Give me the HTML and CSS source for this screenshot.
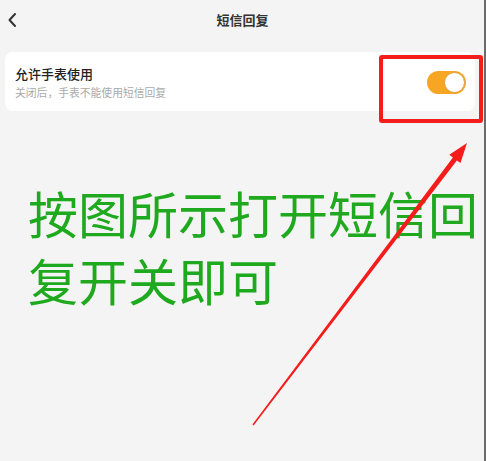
FILE: index.html
```html
<!DOCTYPE html>
<html>
<head>
  <meta charset="utf-8">
  <link rel="stylesheet" href="styles.css">
</head>

<body>
  <div class="page">
    <!-- Top bar -->
    <div class="header">
      <svg class="back" width="10" height="16" viewBox="0 0 10 16">
        <path d="M8 2 L2.5 8 L8 14" fill="none" stroke="#333" stroke-width="2" stroke-linecap="round" stroke-linejoin="round"/>
      </svg>
      <div class="title">短信回复</div>
    </div>

    <!-- Setting card -->
    <div class="card">
      <div class="card-text">
        <div class="card-title">允许手表使用</div>
        <div class="card-desc">关闭后，手表不能使用短信回复</div>
      </div>
      <div class="switch on"><span class="knob"></span></div>
    </div>

    <p class="hint">按图所示打开短信回<br>复开关即可</p>

    <!-- Annotations drawn over the screenshot -->
    <div class="mark-box"></div>
    <svg class="arrow" width="486" height="461" viewBox="0 0 486 461">
      <polygon points="252.4,424.6 452.9,157.4 449.3,154.7 467,143 460.5,163.1 456.9,160.4 253.6,425.4" fill="#f51c1c"/>
    </svg>
  </div>
</body>
</html>
```

FILE: styles.css
```css
html, body {
  margin: 0;
  padding: 0;
}

body {
  background-color: #f4f4f4;
  font-family: "Noto Sans CJK SC", "Noto Sans", sans-serif;
}

.page {
  position: relative;
  width: 486px;
  height: 461px;
  overflow: hidden;
  box-sizing: border-box;
  border-right: 2px solid #6b6b6b;
}

.header {
  position: relative;
  height: 38px;
  display: flex;
  align-items: center;
  justify-content: center;
}

.back {
  position: absolute;
  left: 7px;
  top: 12px;
}

.title {
  font-size: 13px;
  font-weight: bold;
  color: #333;
  margin-left: 1px;
}

.card {
  margin: 14px 9px 0 5px;
  height: 59px;
  background-color: #fff;
  border-radius: 8px;
  display: flex;
  align-items: center;
  justify-content: space-between;
  padding: 0 9px 0 10px;
}

.card-text {
  padding-top: 2px;
}

.card-title {
  font-size: 13px;
  font-weight: 500;
  color: #222;
  line-height: 16px;
}

.card-desc {
  font-size: 10.8px;
  color: #aaa;
  line-height: 14px;
  margin-top: 3px;
}

.switch {
  width: 39px;
  height: 23px;
  border-radius: 12px;
  background-color: #ccc;
  display: flex;
  align-items: center;
  margin-top: 2px;
}

.switch.on {
  background-color: #f6a623;
  justify-content: flex-end;
}

.knob {
  width: 19px;
  height: 19px;
  border-radius: 50%;
  background-color: #fff;
  border: 1px solid #e3a03a;
  margin-right: 1px;
}

.hint {
  margin: 0 0 0 28px;
  padding-top: 68px;
  font-size: 50px;
  line-height: 67px;
  color: #1ea91e;
  font-weight: 400;
}

.mark-box {
  position: absolute;
  left: 379px;
  top: 55px;
  width: 104px;
  height: 68px;
  box-sizing: border-box;
  border: 4px solid #f51c1c;
  border-radius: 3px;
}

.arrow {
  position: absolute;
  left: 0;
  top: 0;
}
```
